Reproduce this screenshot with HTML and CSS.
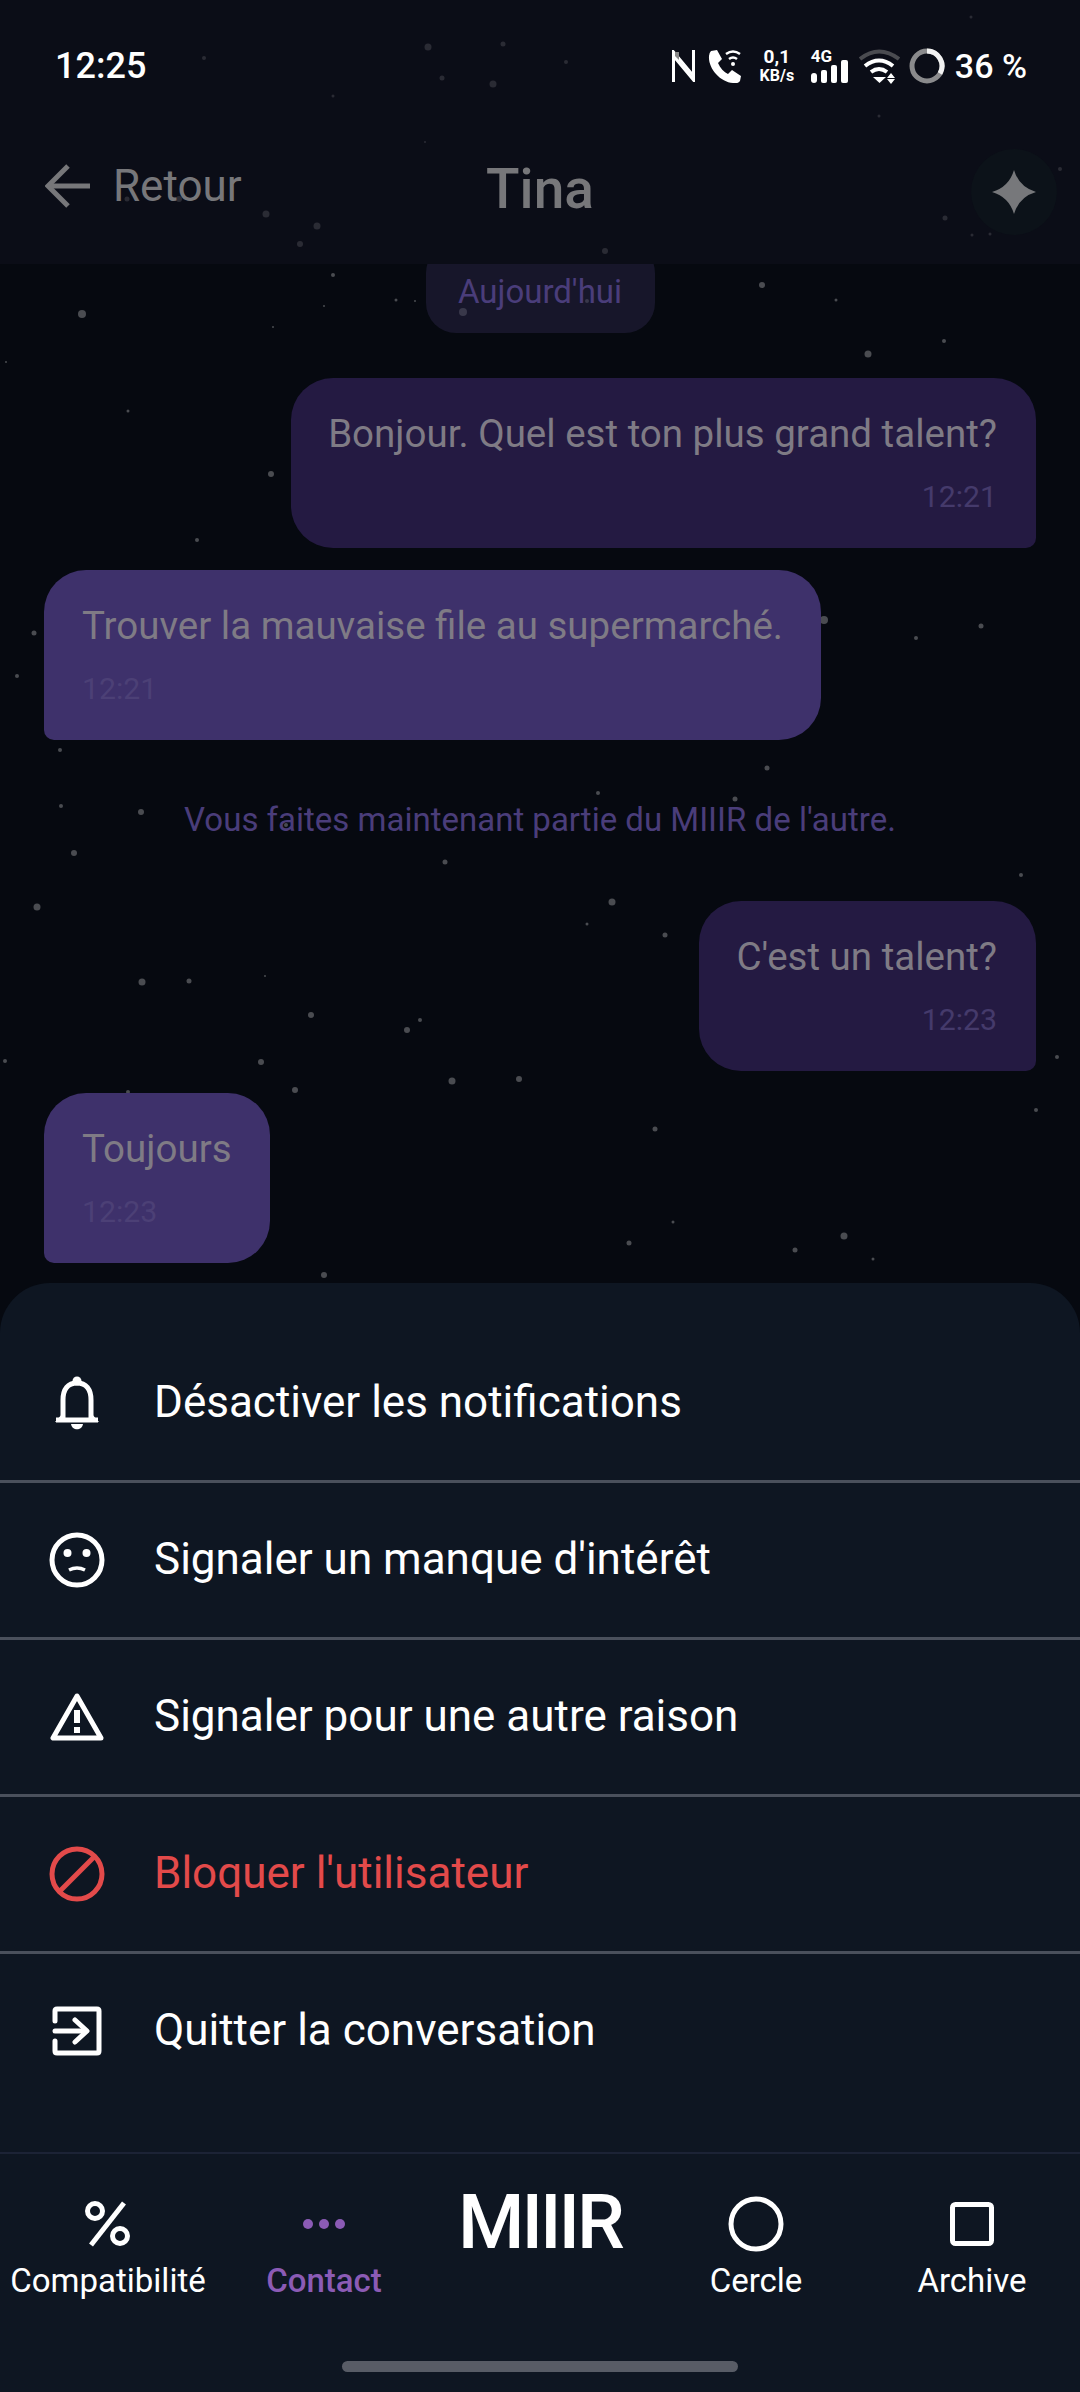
FILE: index.html
```html
<!DOCTYPE html>
<html lang="fr">
<head>
    <meta charset="UTF-8">
    <meta name="viewport" content="width=device-width, initial-scale=1.0">
    <title>Tina - MIIIR</title>
    <link rel="stylesheet" href="styles.css">
</head>
<body>
<div class="screen">
    <!-- star field, sits behind everything -->
    <svg class="stars" width="1080" height="1283" viewBox="0 0 1080 1283">
        <g fill="#4a4c51">
            <circle cx="428" cy="47" r="3.5"/><circle cx="503" cy="44" r="2.5"/><circle cx="971" cy="17" r="1.5"/><circle cx="204" cy="58" r="2"/>
            <circle cx="566" cy="62" r="2"/><circle cx="442" cy="78" r="2.5"/><circle cx="493" cy="84" r="3.5"/><circle cx="333" cy="96" r="1.5"/>
            <circle cx="879" cy="116" r="1.5"/><circle cx="425" cy="142" r="1"/><circle cx="266" cy="214" r="3.5"/><circle cx="317" cy="226" r="3.5"/>
            <circle cx="300" cy="244" r="3"/><circle cx="605" cy="251" r="3"/><circle cx="945" cy="218" r="2.5"/><circle cx="972" cy="235" r="1.5"/>
            <circle cx="990" cy="234" r="1.5"/><circle cx="1060" cy="169" r="2"/><circle cx="127" cy="199" r="2.5"/><circle cx="179" cy="199" r="3"/>
            <circle cx="333" cy="275" r="2"/><circle cx="762" cy="285" r="3"/><circle cx="396" cy="300" r="1.5"/><circle cx="415" cy="301" r="1"/>
            <circle cx="836" cy="300" r="1.5"/><circle cx="324" cy="306" r="1"/><circle cx="82" cy="314" r="4"/><circle cx="463" cy="312" r="4"/>
            <circle cx="587" cy="301" r="2"/><circle cx="273" cy="327" r="1"/><circle cx="944" cy="341" r="2"/><circle cx="868" cy="354" r="3.5"/>
            <circle cx="6" cy="362" r="1"/><circle cx="128" cy="411" r="1.5"/><circle cx="271" cy="474" r="3"/><circle cx="197" cy="540" r="2"/>
            <circle cx="34" cy="633" r="2.5"/><circle cx="824" cy="620" r="4"/><circle cx="981" cy="626" r="2.5"/><circle cx="916" cy="638" r="2"/>
            <circle cx="17" cy="676" r="2"/><circle cx="60" cy="750" r="2"/><circle cx="767" cy="768" r="2.5"/><circle cx="598" cy="793" r="2"/>
            <circle cx="735" cy="799" r="2.5"/><circle cx="61" cy="806" r="2"/><circle cx="141" cy="812" r="3"/><circle cx="309" cy="812" r="2"/>
            <circle cx="286" cy="825" r="2"/><circle cx="74" cy="853" r="3"/><circle cx="445" cy="862" r="2.5"/><circle cx="1021" cy="875" r="2"/>
            <circle cx="37" cy="907" r="3.5"/><circle cx="612" cy="902" r="3.5"/><circle cx="587" cy="924" r="1.5"/><circle cx="665" cy="935" r="2.5"/>
            <circle cx="142" cy="982" r="3.5"/><circle cx="189" cy="981" r="2.5"/><circle cx="265" cy="976" r="1"/><circle cx="311" cy="1015" r="3"/>
            <circle cx="420" cy="1020" r="2"/><circle cx="407" cy="1030" r="3"/><circle cx="5" cy="1061" r="2"/><circle cx="261" cy="1062" r="3"/>
            <circle cx="1057" cy="1057" r="2"/><circle cx="452" cy="1081" r="3.5"/><circle cx="519" cy="1079" r="3"/><circle cx="295" cy="1090" r="3"/>
            <circle cx="128" cy="1092" r="2"/><circle cx="1036" cy="1110" r="2"/><circle cx="655" cy="1129" r="2.5"/><circle cx="673" cy="1222" r="1.5"/>
            <circle cx="629" cy="1243" r="2.5"/><circle cx="795" cy="1250" r="2.5"/><circle cx="844" cy="1236" r="3.5"/><circle cx="873" cy="1259" r="1.5"/>
            <circle cx="324" cy="1275" r="3"/>
        </g>
    </svg>

    <header class="top">
        <div class="status">
            <span class="clock">12:25</span>
            <div class="status-icons">
                <svg class="ic-nfc" width="23" height="32" viewBox="0 0 23 32" fill="none" stroke="#fff" stroke-width="3"><path d="M1.500 32V2l20 24"/><path d="M21.500 0v30L1.500 6"/><path d="M3 2h4v8l-4-4z" fill="#888" stroke="none"/></svg>
                <svg class="ic-call" width="35" height="33" viewBox="0 0 35 33" fill="none">
                    <path d="M4 1l6-1 5 9-4 4c2 5 6 9 10 11l4-4 9 6-1 5q-2 3-7 2C13 32 1 18 2 6q0-3 2-5z" fill="#fff"/>
                    <g stroke="#fff" stroke-width="2.500"><path d="M19 4q7-5 14 0"/><path d="M22 9q4-3 8 0"/></g><circle cx="26" cy="14" r="2" fill="#fff"/>
                </svg>
                <div class="speed"><span>0,1</span><span class="speed-unit">KB/s</span></div>
                <div class="net">
                    <span class="net-label">4G</span>
                    <svg width="37" height="23" viewBox="0 0 37 23" fill="#fff"><rect x="0" y="13" width="6" height="10" rx="3"/><rect x="10" y="10" width="6" height="13" rx="2"/><rect x="20" y="5" width="6" height="18" rx="2"/><rect x="30" y="0" width="7" height="23" rx="2"/></svg>
                </div>
                <svg class="ic-wifi" width="41" height="35" viewBox="0 0 41 35" fill="none" stroke-width="4">
                    <path d="M1 10q19-15 39 0" stroke="#4a4b50"/>
                    <path d="M6 17q14-11 28 0" stroke="#fff"/><path d="M12 23q8-6 16 0" stroke="#fff"/>
                    <path d="M14 28h13l-6.500 6z" fill="#fff" stroke="none"/><path d="M32 24l4 5h-8zM32 35l-4-5h8z" fill="#fff" stroke="none"/>
                </svg>
                <svg class="ic-ring" width="36" height="36" viewBox="0 0 36 36" fill="none" stroke-width="5"><circle cx="18" cy="18" r="15" stroke="#8a8a8c"/><path d="M18 3a15 15 0 0 1 13 22.500" stroke="#f2f2f2"/></svg>
                <span class="battery">36 %</span>
            </div>
        </div>
        <div class="titlebar">
            <div class="back">
                <svg width="46" height="44" viewBox="0 0 46 44" fill="none" stroke="#77777a" stroke-width="5"><path d="M45 22H4"/><path d="M23 2L3 22l20 20"/></svg>
                <span>Retour</span>
            </div>
            <h1 class="name">Tina</h1>
            <div class="spark">
                <svg width="44" height="44" viewBox="0 0 44 44" fill="#77787b"><path d="M22 0Q27 17 44 22 27 27 22 44 17 27 0 22 17 17 22 0z"/></svg>
            </div>
        </div>
    </header>

    <main class="chat">
        <div class="day">Aujourd'hui</div>
        <div class="msg msg-me">
            <p>Bonjour. Quel est ton plus grand talent?</p>
            <time>12:21</time>
        </div>
        <div class="msg msg-other">
            <p>Trouver la mauvaise file au supermarché.</p>
            <time>12:21</time>
        </div>
        <div class="notice">Vous faites maintenant partie du MIIIR de l'autre.</div>
        <div class="msg msg-me">
            <p>C'est un talent?</p>
            <time>12:23</time>
        </div>
        <div class="msg msg-other">
            <p>Toujours</p>
            <time>12:23</time>
        </div>
    </main>

    <section class="sheet">
        <div class="row">
            <span class="row-icon">
                <svg width="44" height="54" viewBox="0 0 44 54" fill="none" stroke="#fff" stroke-width="5">
                    <path d="M8 42V24C8 13 13 7 22 7s14 6 14 17v18"/>
                    <path d="M0 46l8-9v9zM44 46l-8-9v9z" fill="#fff" stroke="none"/><path d="M1 44h42"/>
                    <circle cx="22" cy="5" r="4.500" fill="#fff" stroke="none"/><path d="M16 48h12c-1 7-11 7-12 0z" fill="#fff" stroke="none"/>
                </svg>
            </span>
            <span class="row-text">Désactiver les notifications</span>
        </div>
        <div class="row">
            <span class="row-icon">
                <svg width="56" height="56" viewBox="0 0 56 56" fill="none" stroke="#fff" stroke-width="5">
                    <circle cx="28" cy="28" r="25"/><circle cx="18.500" cy="21" r="4" fill="#fff" stroke="none"/><circle cx="37.500" cy="21" r="4" fill="#fff" stroke="none"/>
                    <path d="M20 38q8-4 16 0" stroke-width="3.500"/>
                </svg>
            </span>
            <span class="row-text">Signaler un manque d'intérêt</span>
        </div>
        <div class="row">
            <span class="row-icon">
                <svg width="54" height="48" viewBox="0 0 54 48" fill="none" stroke="#fff" stroke-width="5" stroke-linejoin="round">
                    <path d="M27 3L3 45h48z"/><path d="M27 17v13" stroke-width="6"/><path d="M27 34v6" stroke-width="6"/>
                </svg>
            </span>
            <span class="row-text">Signaler pour une autre raison</span>
        </div>
        <div class="row row-danger">
            <span class="row-icon">
                <svg width="56" height="56" viewBox="0 0 56 56" fill="none" stroke="#e34a4a" stroke-width="5"><circle cx="28" cy="28" r="25"/><path d="M11 45L45 11"/></svg>
            </span>
            <span class="row-text">Bloquer l'utilisateur</span>
        </div>
        <div class="row">
            <span class="row-icon">
                <svg width="50" height="50" viewBox="0 0 50 50" fill="none" stroke="#fff" stroke-width="5" stroke-linecap="round" stroke-linejoin="round">
                    <path d="M3 15V5q0-2 2-2h40q2 0 2 2v40q0 2-2 2H5q-2 0-2-2V35"/><path d="M3 25h30"/><path d="M23 14l12 11-12 11"/>
                </svg>
            </span>
            <span class="row-text">Quitter la conversation</span>
        </div>
    </section>

    <nav class="tabs">
        <div class="tab">
            <span class="tab-icon">
                <svg width="46" height="46" viewBox="0 0 46 46" fill="none" stroke="#fff" stroke-width="5"><circle cx="10" cy="10" r="7.500"/><circle cx="35" cy="35" r="7.500"/><path d="M39 2L6 44"/></svg>
            </span>
            <span>Compatibilité</span>
        </div>
        <div class="tab tab-active">
            <span class="tab-icon">
                <svg width="44" height="12" viewBox="0 0 44 12" fill="#8b5bb5"><circle cx="6" cy="6" r="5"/><circle cx="22" cy="6" r="5"/><circle cx="38" cy="6" r="5"/></svg>
            </span>
            <span>Contact</span>
        </div>
        <div class="tab tab-logo">MIIIR</div>
        <div class="tab">
            <span class="tab-icon">
                <svg width="56" height="56" viewBox="0 0 56 56" fill="none" stroke="#fff" stroke-width="5"><circle cx="28" cy="28" r="25"/></svg>
            </span>
            <span>Cercle</span>
        </div>
        <div class="tab">
            <span class="tab-icon">
                <svg width="44" height="44" viewBox="0 0 44 44" fill="none" stroke="#fff" stroke-width="5"><rect x="2.500" y="2.500" width="39" height="39" rx="3"/></svg>
            </span>
            <span>Archive</span>
        </div>
        <div class="home-pill"></div>
    </nav>
</div>
</body>
</html>
```

FILE: styles.css
```css
* {
    box-sizing: border-box;
}
body {
    margin: 0;
    background-color: #060910;
    font-family: Roboto, "Noto Sans", sans-serif;
}
.screen {
    position: relative;
    display: flex;
    flex-direction: column;
    width: 1080px;
    height: 2392px;
    overflow: hidden;
    background-color: #060910;
}
.stars {
    position: absolute;
    top: 0;
    left: 0;
}

/* status bar + title */
.top {
    position: relative;
    height: 264px;
    flex-shrink: 0;
    background-color: rgba(16, 16, 30, 0.55);
    padding: 44px 0 0 0;
}
.status {
    display: flex;
    justify-content: space-between;
    align-items: center;
    height: 42px;
    padding: 0 53px 0 55px;
    color: #fff;
}
.clock {
    font-size: 36px;
    font-weight: 500;
    margin-top: 2px;
}
.status-icons {
    display: flex;
    align-items: center;
    position: relative;
    top: 1px;
}
.ic-nfc {
    margin-right: 12px;
}
.ic-call {
    margin-right: 17px;
}
.speed {
    display: flex;
    flex-direction: column;
    align-items: center;
    width: 36px;
    font-size: 19px;
    font-weight: 700;
    line-height: 19px;
    margin-right: 16px;
}
.speed-unit {
    font-size: 16px;
    font-weight: 700;
}
.net {
    position: relative;
    width: 39px;
    height: 34px;
    margin-right: 9px;
    display: flex;
    align-items: flex-end;
}
.net-label {
    position: absolute;
    top: -2px;
    left: 0;
    font-size: 17px;
    font-weight: 700;
    line-height: 18px;
}
.ic-wifi {
    margin-right: 9px;
}
.ic-ring {
    margin-right: 10px;
}
.battery {
    font-size: 34px;
    font-weight: 500;
}
.titlebar {
    position: relative;
    display: flex;
    justify-content: center;
    align-items: center;
    height: 86px;
    margin-top: 60px;
}
.back {
    position: absolute;
    left: 45px;
    top: 0;
    height: 80px;
    display: flex;
    align-items: center;
    gap: 22px;
    color: #77777a;
    font-size: 44px;
}
.name {
    margin: 0;
    color: #77777a;
    font-size: 55px;
    font-weight: 500;
}
.spark {
    position: absolute;
    right: 23px;
    top: 3px;
    width: 86px;
    height: 86px;
    border-radius: 50%;
    background-color: #0c1219;
    display: flex;
    justify-content: center;
    align-items: center;
}

/* chat */
.chat {
    position: relative;
    flex: 1;
    overflow: hidden;
    display: flex;
    flex-direction: column;
    gap: 22px;
    padding: 0 44px;
}
.day {
    align-self: center;
    height: 90px;
    width: 229px;
    margin-top: -21px;
    margin-bottom: 23px;
    padding-top: 21px;
    border-radius: 30px;
    background-color: rgba(40, 36, 68, 0.5);
    color: #4a3d7a;
    font-size: 33px;
    line-height: 56px;
    text-align: center;
}
.msg {
    height: 170px;
    padding: 31px 38px 0 38px;
    border-radius: 42px;
    color: #7f7b85;
    font-size: 38.5px;
}
.msg p {
    margin: 0;
    line-height: 50px;
    white-space: nowrap;
}
.msg time {
    display: block;
    margin-top: 20px;
    font-size: 30.25px;
    line-height: 36px;
}
.msg-me {
    align-self: flex-end;
    padding-left: 37px;
    padding-right: 39px;
    background-color: #241a42;
    border-bottom-right-radius: 10px;
}
.msg-me time {
    text-align: right;
    color: #453a6b;
}
.msg-other {
    align-self: flex-start;
    background-color: #3e316b;
    border-bottom-left-radius: 10px;
}
.msg-other time {
    color: #4c4076;
}
.notice {
    height: 139px;
    margin: 0 0 -22px 0;
    padding-top: 36px;
    color: #4a3d7a;
    font-size: 33px;
    line-height: 44px;
    text-align: center;
}

/* bottom sheet */
.sheet {
    position: relative;
    flex-shrink: 0;
    height: 869px;
    padding: 43px 0 40px 0;
    background-color: #0e1622;
    border-radius: 50px 50px 0 0;
}
.row {
    display: flex;
    align-items: center;
    height: 157px;
    border-bottom: 3px solid #4a505c;
    color: #fff;
    font-size: 44px;
}
.row:last-child {
    border-bottom-color: transparent;
}
.row-danger {
    color: #e34a4a;
}
.row-icon {
    display: flex;
    justify-content: center;
    align-items: center;
    width: 154px;
}
.row-text {
    margin-bottom: 2px;
}

/* bottom nav */
.tabs {
    position: relative;
    flex-shrink: 0;
    display: grid;
    grid-template-columns: repeat(5, 216px);
    height: 240px;
    background-color: #0e1622;
    border-top: 2px solid #1c2336;
}
.tab {
    display: flex;
    flex-direction: column;
    align-items: center;
    color: #fff;
    font-size: 33px;
    padding-top: 38px;
    white-space: nowrap;
}
.tab-icon {
    display: flex;
    justify-content: center;
    align-items: center;
    height: 64px;
    margin-bottom: 5px;
}
.tab-active {
    color: #8b5bb5;
    font-weight: 500;
}
.tab-logo {
    font-size: 76px;
    font-weight: 500;
    line-height: 76px;
    padding-top: 30px;
    letter-spacing: -3px;
}
.home-pill {
    position: absolute;
    left: 342px;
    bottom: 20px;
    width: 396px;
    height: 11px;
    border-radius: 6px;
    background-color: #585c66;
}
```
